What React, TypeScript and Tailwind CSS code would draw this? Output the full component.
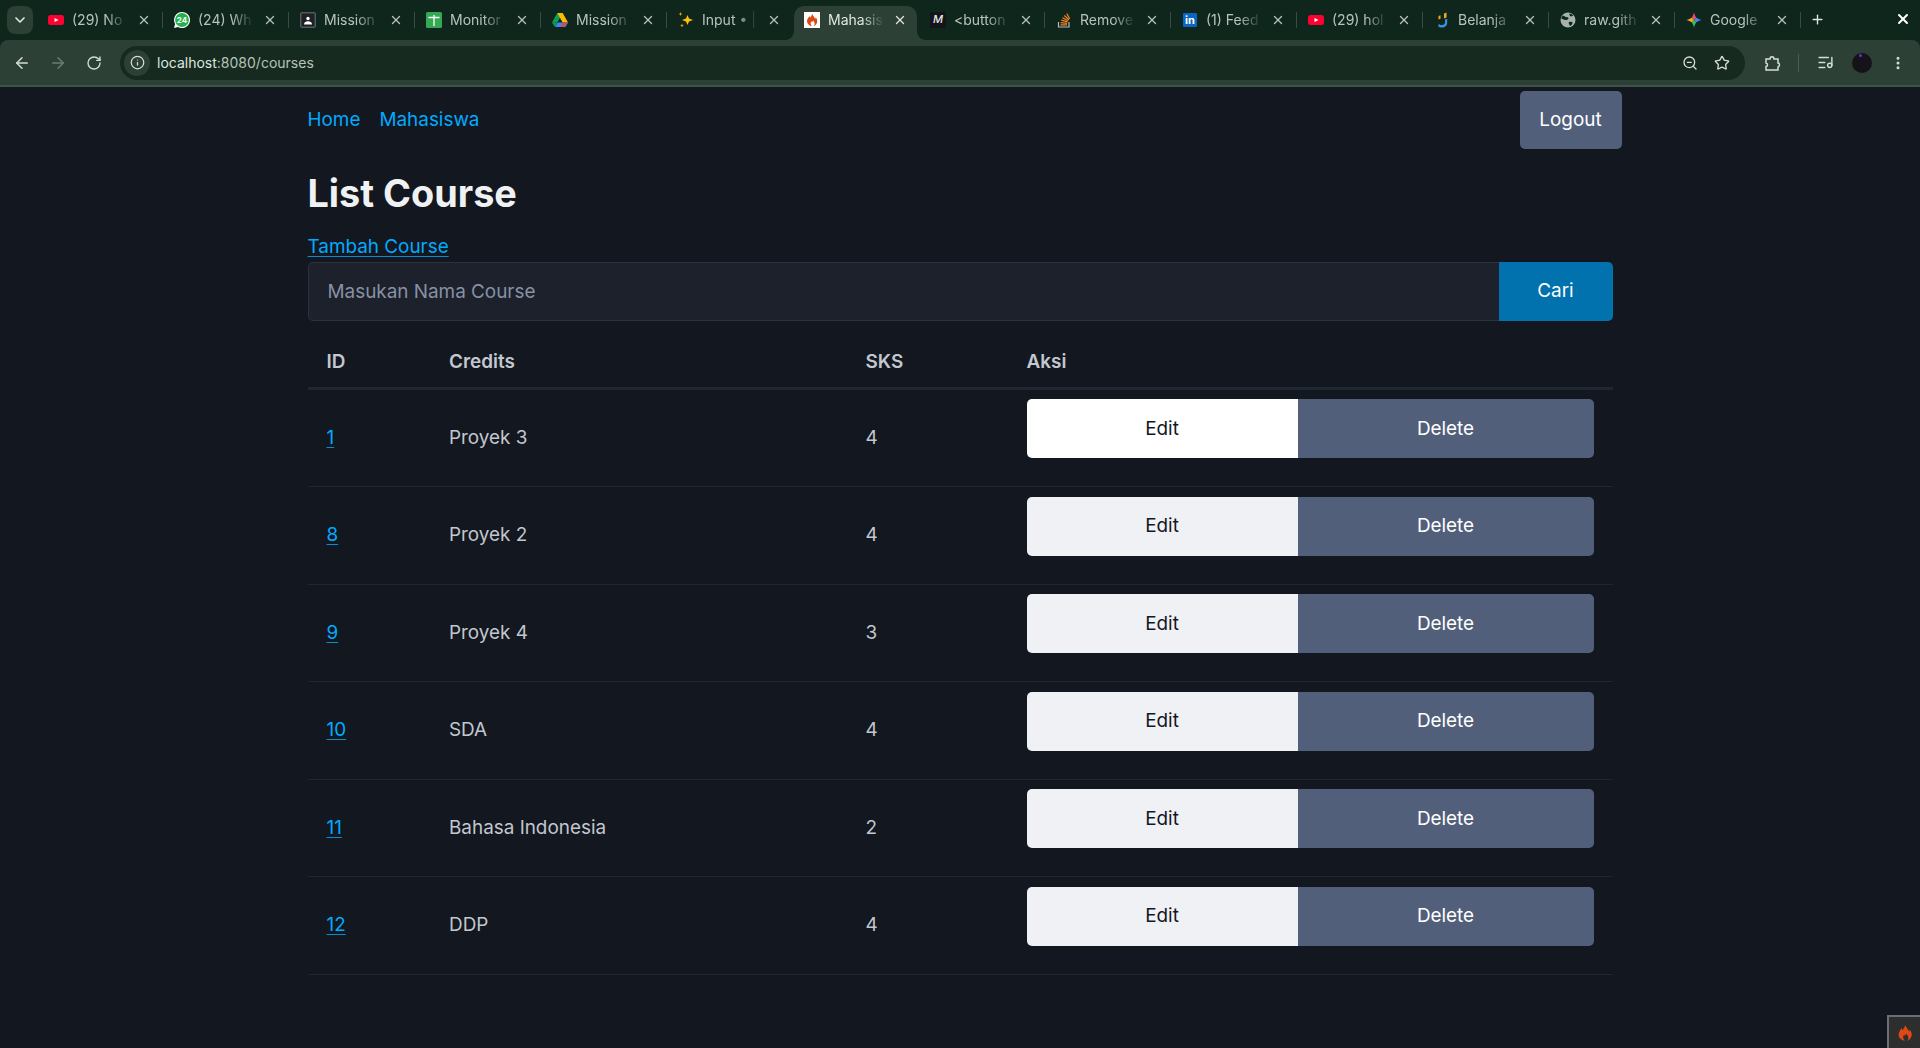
import React from 'react';
import { ArrowLeft, ArrowRight, ChevronDown, EllipsisVertical, Info, ListMusic, Plus, RotateCw, Star, X, ZoomOut } from 'lucide-react';

const Flame = ({ className }: { className?: string }) => (
  <svg viewBox="0 0 16 16" className={className}>
    <path
      fill="#dd4814"
      fillRule="evenodd"
      d="M8.4 1c.4 2.3 2.6 3.4 3.3 5.7.4-.5.5-1.1.4-1.9 1.3 1.3 1.9 3 1.9 4.5 0 3-2.1 5.2-4.6 5.7 1.2-.8 1.8-1.9 1.6-3.1-.2-1.2-1.2-1.9-1.6-3.2-.6.8-1.2 1.2-1.6 2-.2-.5-.3-.9-.3-1.4-.8.7-1.2 1.6-1.1 2.6.1 1.3.8 2.3 1.7 3.1C5 14.500 2.300 12.400 2.300 9.300c0-2.500 1.800-3.700 2.700-5.800.3.900.6 1.500 1.200 1.900C6.600 3.800 7.700 2.600 8.400 1z"
    />
  </svg>
);

const YoutubeIcon = () => (
  <svg viewBox="0 0 16 16" className="h-4 w-4">
    <rect x="0" y="3" width="16" height="10" rx="2.500" fill="#ff0033" />
    <path d="M6.500 6l4 2-4 2z" fill="#fff" />
  </svg>
);

const favicons: Record<string, React.ReactNode> = {
  youtube: <YoutubeIcon />,
  whatsapp: (
    <svg viewBox="0 0 16 16" className="h-4 w-4">
      <path d="M8 0a8 8 0 1 1-4 14.900L0 16l1.100-4A8 8 0 0 1 8 0z" fill="#fff" />
      <circle cx="8" cy="8" r="6.900" fill="#25b14a" />
      <text x="8" y="10.800" textAnchor="middle" fontSize="8" fontWeight="700" fontFamily="Inter, sans-serif" fill="#fff">24</text>
    </svg>
  ),
  classroom: (
    <svg viewBox="0 0 16 16" className="h-4 w-4">
      <rect width="16" height="16" rx="2" fill="#55595e" />
      <rect x="1.500" y="1.500" width="13" height="13" fill="#1f2124" />
      <circle cx="8" cy="6.500" r="1.700" fill="#fff" />
      <path d="M4 12.500c0-2.200 1.800-3.300 4-3.300s4 1.100 4 3.300z" fill="#fff" />
    </svg>
  ),
  sheets: (
    <svg viewBox="0 0 16 16" className="h-4 w-4">
      <rect width="16" height="16" rx="1.500" fill="#34a853" />
      <path d="M2.500 5.500h11M8 3v11" stroke="#fff" strokeWidth="1.300" />
    </svg>
  ),
  drive: (
    <svg viewBox="0 0 16 16" className="h-4 w-4">
      <path d="M5.300 1h5.400l-5.400 9.500H0z" fill="#0f9d58" />
      <path d="M10.700 1L16 10.500h-5.400L5.300 1z" fill="#fbbc04" />
      <path d="M3 15l2.700-4.500H16L13.300 15z" fill="#4285f4" />
      <path d="M0 10.500h5.300L3 15z" fill="#0f9d58" />
      <path d="M10.600 10.500H16L13.300 15H8z" fill="#ea4335" fillOpacity="0.700" />
    </svg>
  ),
  sparkles: (
    <svg viewBox="0 0 16 16" className="h-4 w-4">
      <path d="M9.500 3l1.500 3.500L15 8l-4 1.500L9.500 13 8 9.500 4 8l4-1.500z" fill="#ffc107" />
      <path d="M2.500 0l.6 1.400 1.400.6-1.400.6-.6 1.400-.6-1.400L.5 2l1.400-.6zM4 11.500l.6 1.400 1.400.6-1.400.6-.6 1.400-.6-1.400-1.400-.6 1.400-.6z" fill="#ff9800" />
    </svg>
  ),
  codeigniter: (
    <span className="flex h-4 w-4 items-center justify-center bg-white">
      <Flame className="h-[14px] w-[14px]" />
    </span>
  ),
  mdn: (
    <span className="flex h-4 w-4 items-center justify-center bg-[#15141a] text-[11px] font-medium italic leading-none text-[#e8e8ea]">M</span>
  ),
  stackoverflow: (
    <svg viewBox="0 0 16 16" className="h-4 w-4">
      <path d="M2.500 10v5h10.500v-5" fill="none" stroke="#b7bcc0" strokeWidth="1.200" />
      <path d="M4.500 12.800h6.500M4.700 10.600l6.400.7M5.300 8.200l6.200 1.700M6.500 5.800l5.600 3M8.300 3.600l4.700 4.200M10.700 1.500l3 5.200" fill="none" stroke="#f48024" strokeWidth="1.300" />
    </svg>
  ),
  linkedin: (
    <span className="flex h-[14px] w-[14px] items-end justify-center rounded-[1px] bg-[#0a66c2] text-[11px] font-bold leading-[13px] text-white">in</span>
  ),
  jago: (
    <svg viewBox="0 0 16 16" className="h-4 w-4">
      <path d="M10 1.500l2.500-1v5l-2.500 1z" fill="#f5a623" />
      <path d="M4.500 4l2-.8v3.500l-2 .8z" fill="#f5a623" />
      <path d="M11 7.500l2.200-.8v4.300c0 2.500-2.200 4.500-5.200 4.500-1.500 0-3-.6-4-1.600l1-2c1 .8 2 1.200 3 1.200 1.800 0 3-1 3-2.500z" fill="#3b8fe0" />
    </svg>
  ),
  globe: (
    <svg viewBox="0 0 16 16" className="h-4 w-4">
      <circle cx="8" cy="8" r="7.500" fill="#a8b2ac" />
      <path d="M3 3.500c1.500.5 2 1 3 1.500s2.500 0 2.500 1.200S7 8 5.500 8 3 7 1.200 6.500C1.500 5.200 2.200 4.300 3 3.500zM9 10c1.300-.5 3-.5 3.500.3s-.8 3-2.500 3.800c-.5-1.500-2-3.500-1-4.100zM9.500 1.500c1.500.2 3 1.200 3.800 2.300l-2.300.7c-1-.5-2-1.500-1.500-3z" fill="#0f261c" />
    </svg>
  ),
  gemini: (
    <svg viewBox="0 0 16 16" className="h-4 w-4">
      <path d="M8 0c.3 2 1 3.700 2.300 5.700L8 8 5.700 5.700C7 3.700 7.700 2 8 0z" fill="#ea4c6a" />
      <path d="M16 8c-2 .3-3.700 1-5.700 2.300L8 8l2.300-2.300C12.300 7 14 7.700 16 8z" fill="#4285f4" />
      <path d="M8 16c-.3-2-1-3.700-2.300-5.700L8 8l2.300 2.300C9 12.300 8.300 14 8 16z" fill="#34c05a" />
      <path d="M0 8c2-.3 3.700-1 5.700-2.300L8 8l-2.300 2.300C3.700 9 2 8.300 0 8z" fill="#f9a825" />
    </svg>
  ),
};

const tabs = [
  { icon: 'youtube', title: '(29) No' },
  { icon: 'whatsapp', title: '(24) Wh' },
  { icon: 'classroom', title: 'Mission' },
  { icon: 'sheets', title: 'Monitor' },
  { icon: 'drive', title: 'Mission' },
  { icon: 'sparkles', title: 'Input • |' },
  { icon: 'codeigniter', title: 'Mahasis', active: true },
  { icon: 'mdn', title: '<button' },
  { icon: 'stackoverflow', title: 'Remove' },
  { icon: 'linkedin', title: '(1) Feed' },
  { icon: 'youtube', title: '(29) hol' },
  { icon: 'jago', title: 'Belanja' },
  { icon: 'globe', title: 'raw.gith' },
  { icon: 'gemini', title: 'Google' },
];

const courses = [
  { id: 1, name: 'Proyek 3', sks: 4 },
  { id: 8, name: 'Proyek 2', sks: 4 },
  { id: 9, name: 'Proyek 4', sks: 3 },
  { id: 10, name: 'SDA', sks: 4 },
  { id: 11, name: 'Bahasa Indonesia', sks: 2 },
  { id: 12, name: 'DDP', sks: 4 },
];

const BrowserChrome = () => (
  <div className="border-b-2 border-[#3f5447] bg-[#0e261b] text-[#b8c3bc]">
    {/* Tab strip */}
    <div className="flex h-10 items-start pl-[7px] pt-[6px]">
      <div className="mr-[5px] flex h-7 w-[26px] items-center justify-center rounded-lg bg-[#2c4036]">
        <ChevronDown className="h-4 w-4 text-[#e0e6e2]" strokeWidth={2.500} />
      </div>
      {tabs.map((tab, index) => {
        const hideSeparator = tab.active || tabs[index + 1]?.active;
        return (
          <div
            key={index}
            className={`relative flex h-[34px] shrink-0 items-center pb-[7px] pl-[10px] ${tab.active ? 'mr-[3px] w-[123px] rounded-t-[10px] bg-[#2c4036] text-[#dfe6e1]' : 'w-[126px]'}`}
          >
            {tab.active && (
              <>
                <span className="absolute bottom-0 left-[-8px] h-2 w-2 bg-[radial-gradient(circle_at_0_0,transparent_7.500px,#2c4036_8px)]" />
                <span className="absolute bottom-0 right-[-8px] h-2 w-2 bg-[radial-gradient(circle_at_100%_0,transparent_7.500px,#2c4036_8px)]" />
              </>
            )}
            <span className="flex h-4 w-4 shrink-0 items-center justify-center">{favicons[tab.icon]}</span>
            <span className="ml-2 w-[56px] overflow-hidden whitespace-nowrap text-[14px] leading-5 [mask-image:linear-gradient(to_right,black_60%,transparent)]">
              {tab.title}
            </span>
            <X className="absolute left-[99px] top-[7px] h-[14px] w-[14px]" strokeWidth={2.200} />
            {!hideSeparator && <span className="absolute right-[1px] top-[6px] h-4 w-px bg-[#3a4c42]" />}
          </div>
        );
      })}
      <Plus className="ml-[8px] mt-[6px] h-[15px] w-[15px] text-[#dfe6e1]" strokeWidth={2.200} />
      <X className="ml-[70px] mt-[5px] h-4 w-4 text-white" strokeWidth={3} />
    </div>

    {/* Toolbar */}
    <div className="flex h-[45px] items-center rounded-t-lg bg-[#2c4036]">
      <ArrowLeft className="ml-[13px] h-[18px] w-[18px] text-[#d5ddd8]" />
      <ArrowRight className="ml-[18px] h-[18px] w-[18px] text-[#6b7c72]" />
      <RotateCw className="ml-[19px] h-4 w-4 text-[#d5ddd8]" />
      <div className="ml-[18px] flex h-[34px] w-[1625px] items-center rounded-full bg-[#172a1f] pl-[4px] pr-[15px]">
        <div className="flex h-[26px] w-[26px] items-center justify-center rounded-full bg-[#2c4036]">
          <Info className="h-[15px] w-[15px] text-[#d5ddd8]" />
        </div>
        <span className="ml-[7px] text-[14px] text-[#dfe6e1]">localhost<span className="text-[#b8c3bc]">:8080/courses</span></span>
        <ZoomOut className="ml-auto h-4 w-4 text-[#d5ddd8]" />
        <Star className="ml-4 h-4 w-4 text-[#d5ddd8]" />
      </div>
      <svg viewBox="0 0 18 18" className="ml-[19px] h-[18px] w-[18px]" fill="none" stroke="#d5ddd8" strokeWidth="1.500">
        <path d="M2 5h4c0-3 4-3 4 0h4v4c2 0 2 3 0 4v3H2v-3.500c2 0 2-3.500 0-3.500z" />
      </svg>
      <span className="ml-[16px] h-[18px] w-px bg-[#4a5c52]" />
      <ListMusic className="ml-[18px] h-[17px] w-[17px] text-[#d5ddd8]" />
      <span className="relative ml-[18px] h-5 w-5 rounded-full bg-[#15131a]">
        <span className="absolute left-[7px] top-px h-[3px] w-[3px] rounded-full bg-[#6a2fd0]" />
      </span>
      <EllipsisVertical className="ml-[18px] h-4 w-4 text-[#d5ddd8]" strokeWidth={2.500} />
    </div>
  </div>
);

const App: React.FC = () => {
  return (
    <div className="relative h-[1048px] overflow-hidden bg-[#13171f] font-[Inter,sans-serif] text-[18.900px] leading-[30px] text-[#c2c7d0]">
      <BrowserChrome />

      <main className="mx-auto w-[1305px] pt-[4px]">
        <nav className="mr-[-9px] flex items-center justify-between">
          <div className="flex gap-[19px] pb-px text-[#01aaff]">
            <a href="#">Home</a>
            <a href="#">Mahasiswa</a>
          </div>
          <button className="h-[58px] w-[102px] rounded-[5px] bg-[#525f7a] pb-px text-white">Logout</button>
        </nav>

        <h1 className="mt-[19px] text-[37.800px] font-bold leading-[50px] text-[#f0f1f3]">List Course</h1>

        <a href="#" className="mt-[14px] block w-fit text-[#01aaff] underline decoration-[#0a8bd0] underline-offset-[2.500px]">
          Tambah Course
        </a>

        <form className="flex h-[59px]">
          <input
            placeholder="Masukan Nama Course"
            className="min-w-0 flex-1 rounded-l-[5px] border border-r-0 border-[#2a3140] bg-[#1c212c] pl-[19px] text-[#c2c7d0] placeholder:text-[#8891a4]"
          />
          <button type="button" className="w-[114px] rounded-r-[5px] bg-[#0172ad] pb-px text-white">Cari</button>
        </form>

        <table className="mt-[16px] w-full table-fixed border-collapse text-left">
          <colgroup>
            <col className="w-[122.500px]" />
            <col className="w-[416.500px]" />
            <col className="w-[161px]" />
            <col />
          </colgroup>
          <thead>
            <tr className="h-[51px] border-b-[3px] border-[#202632] font-semibold">
              <th className="px-[19px] pt-px font-semibold">ID</th>
              <th className="px-[19px] pt-px font-semibold">Credits</th>
              <th className="px-[19px] pt-px font-semibold">SKS</th>
              <th className="px-[19px] pt-px font-semibold">Aksi</th>
            </tr>
          </thead>
          <tbody>
            {courses.map((course) => (
              <tr key={course.id} className="h-[97.400px] border-b border-[#202632]">
                <td className="px-[19px]">
                  <a href="#" className="text-[#01aaff] underline decoration-[#0a8bd0] underline-offset-[2.500px]">{course.id}</a>
                </td>
                <td className="px-[19px]">{course.name}</td>
                <td className="px-[19px]">{course.sks}</td>
                <td className="px-[19px] pb-[28px] pt-[9.500px]">
                  <div className="flex h-[59px]">
                    <button className={`w-[271px] rounded-l-[5px] text-[#13171f] ${course.id === 1 ? 'bg-white' : 'bg-[#f0f1f5]'}`}>Edit</button>
                    <button className="w-[296px] rounded-r-[5px] bg-[#525f7a] text-white">Delete</button>
                  </div>
                </td>
              </tr>
            ))}
          </tbody>
        </table>
      </main>

      {/* Debug toolbar badge */}
      <div className="absolute bottom-0 right-0 flex h-[33px] w-[33px] items-center justify-center border-l-2 border-t-2 border-[#6b6f74] bg-[#2e2e2e]">
        <Flame className="h-[18px] w-[18px]" />
      </div>
    </div>
  );
};

export default App;
